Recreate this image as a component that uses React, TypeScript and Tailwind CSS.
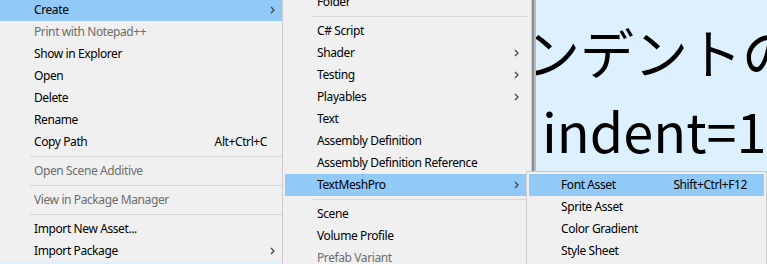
import React from 'react';

type Item =
  | { label: string; shortcut?: string; arrow?: boolean; disabled?: boolean; active?: boolean }
  | 'sep';

const mainMenu: Item[] = [
  { label: 'Create', arrow: true, active: true },
  { label: 'Print with Notepad++', disabled: true },
  { label: 'Show in Explorer' },
  { label: 'Open' },
  { label: 'Delete' },
  { label: 'Rename' },
  { label: 'Copy Path', shortcut: 'Alt+Ctrl+C' },
  'sep',
  { label: 'Open Scene Additive', disabled: true },
  'sep',
  { label: 'View in Package Manager', disabled: true },
  'sep',
  { label: 'Import New Asset...' },
  { label: 'Import Package', arrow: true },
];

const createMenu: Item[] = [
  { label: 'Folder' },
  'sep',
  { label: 'C# Script' },
  { label: 'Shader', arrow: true },
  { label: 'Testing', arrow: true },
  { label: 'Playables', arrow: true },
  { label: 'Text' },
  { label: 'Assembly Definition' },
  { label: 'Assembly Definition Reference' },
  { label: 'TextMeshPro', arrow: true, active: true },
  'sep',
  { label: 'Scene' },
  { label: 'Volume Profile' },
  { label: 'Prefab Variant', disabled: true },
];

const tmpMenu: Item[] = [
  { label: 'Font Asset', shortcut: 'Shift+Ctrl+F12', active: true },
  { label: 'Sprite Asset' },
  { label: 'Color Gradient' },
  { label: 'Style Sheet' },
];

function Chevron() {
  return (
    <svg width="5" height="8" viewBox="0 0 5 8" className="shrink-0">
      <path d="M1 1 L4 4 L1 7" fill="none" stroke="#404040" strokeWidth="1.2" />
    </svg>
  );
}

function MenuRows({ items, textPad, sepLeft, sepRight, shortcutPad, arrowPad }: {
  items: Item[]; textPad: string; sepLeft: string; sepRight: string; shortcutPad: string; arrowPad: string;
}) {
  return (
    <>
      {items.map((item, i) => {
        if (item === 'sep') {
          return (
            <div key={i} className={`h-[7px] pt-[3px] ${sepLeft} ${sepRight}`}>
              <div className="h-px bg-[#d7d7d7]" />
            </div>
          );
        }
        return (
          <div key={i}
            className={`flex items-center h-[22px] ${textPad} ${item.active ? 'bg-[#91c9f7]' : ''} ${item.disabled ? 'text-[#6d6d6d]' : 'text-black'}`}>
            <span className="flex-1 whitespace-nowrap">{item.label}</span>
            {item.shortcut && <span className={`whitespace-nowrap ${shortcutPad}`}>{item.shortcut}</span>}
            {item.arrow && <span className={`flex ${arrowPad}`}><Chevron /></span>}
          </div>
        );
      })}
    </>
  );
}

export default function App() {
  return (
    <div className="relative w-[767px] h-[264px] overflow-hidden bg-[#dcf0fe] font-['Noto_Sans',sans-serif] text-[12px] leading-[22px] tracking-[-0.4px]">
      {/* editor text behind the menus */}
      <div className="pt-[13px] font-['Noto_Sans_CJK_JP',sans-serif] text-[54px] leading-[78px] tracking-normal text-black whitespace-nowrap">
        <div className="ml-[472px]">インデントの</div>
        <div className="ml-[542px]">indent=1</div>
      </div>

      <div className="absolute left-0 top-[-1px] w-[282px] bg-[#f0f0f0]">
        <MenuRows items={mainMenu} textPad="pl-[34px]" sepLeft="ml-[30px]" sepRight="" shortcutPad="pr-[15px]" arrowPad="pr-[7px]" />
      </div>

      <div className="absolute left-[282px] top-[-12px] w-[250px] border border-[#cccccc] p-[2px] bg-[#f0f0f0] shadow-[2px_0_0_#8c8c8c,4px_0_0_#b4bcc2]">
        <MenuRows items={createMenu} textPad="pl-[32px]" sepLeft="ml-[28px]" sepRight="mr-px" shortcutPad="pr-[15px]" arrowPad="pr-[10px]" />
      </div>

      <div className="absolute left-[526px] top-[171px] w-[241px] border border-[#cccccc] p-[2px] bg-[#f0f0f0]">
        <MenuRows items={tmpMenu} textPad="pl-[32px]" sepLeft="ml-[28px]" sepRight="" shortcutPad="pr-[17px]" arrowPad="pr-[10px]" />
      </div>
    </div>
  );
}
